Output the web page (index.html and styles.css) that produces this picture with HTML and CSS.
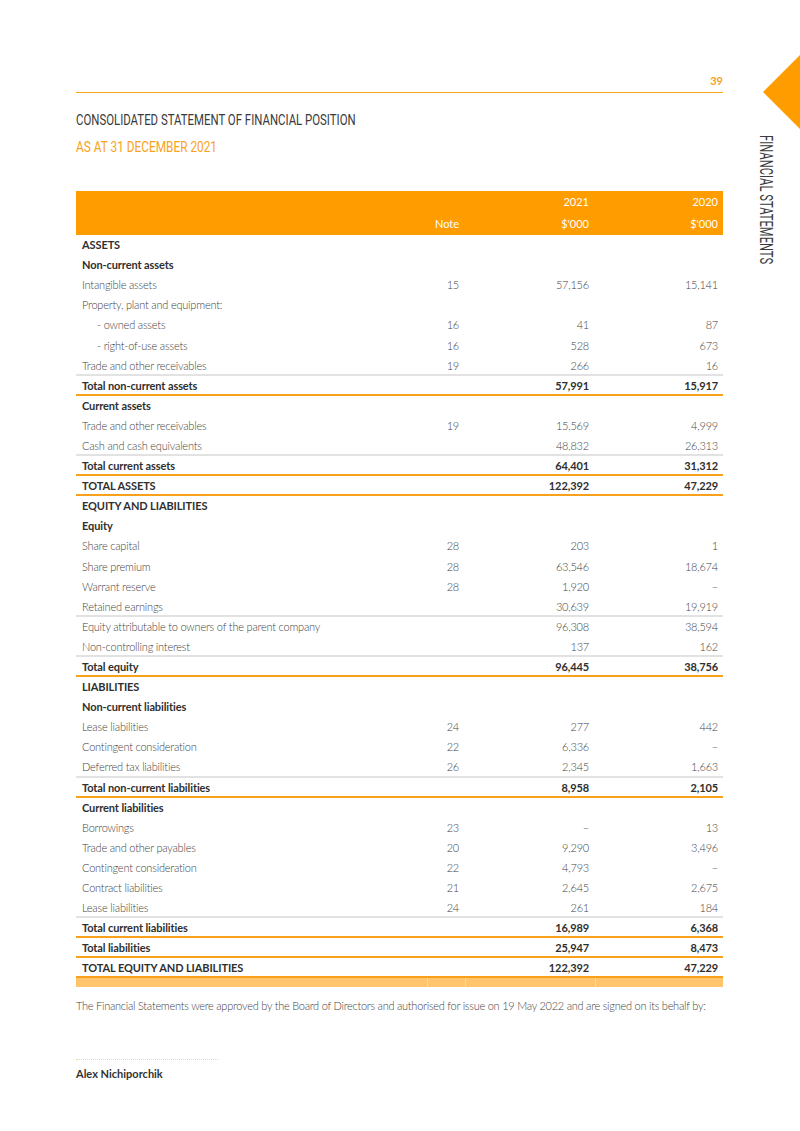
FILE: index.html
```html
<!DOCTYPE html>
<html lang="en">
<head>
<meta charset="utf-8">
<title>Consolidated Statement of Financial Position</title>
<link rel="stylesheet" href="styles.css">
</head>
<body>
<div class="page">
  <div class="topbar"><span class="pagenum">39</span></div>
  <svg class="tab" width="37" height="74" viewBox="0 0 37 74"><polygon points="37,0 0,37 37,74" fill="#ff9c00"/></svg>
  <div class="side">FINANCIAL STATEMENTS</div>

  <h1 class="title"><span class="cond">CONSOLIDATED STATEMENT OF FINANCIAL POSITION</span></h1>
  <h2 class="subtitle"><span class="cond">AS AT 31 DECEMBER 2021</span></h2>

  <div class="fin">
    <div class="hrow"><span></span><span></span><span>2021</span><span>2020</span></div>
    <div class="hrow"><span></span><span>Note</span><span>$'000</span><span>$'000</span></div>

    <div class="row b"><span>ASSETS</span><span></span><span></span><span></span></div>
    <div class="row b"><span>Non-current assets</span><span></span><span></span><span></span></div>
    <div class="row"><span>Intangible assets</span><span>15</span><span>57,156</span><span>15,141</span></div>
    <div class="row"><span>Property, plant and equipment:</span><span></span><span></span><span></span></div>
    <div class="row ind"><span>- owned assets</span><span>16</span><span>41</span><span>87</span></div>
    <div class="row ind"><span>- right-of-use assets</span><span>16</span><span>528</span><span>673</span></div>
    <div class="row gl"><span>Trade and other receivables</span><span>19</span><span>266</span><span>16</span></div>
    <div class="row b ol"><span>Total non-current assets</span><span></span><span>57,991</span><span>15,917</span></div>
    <div class="row b"><span>Current assets</span><span></span><span></span><span></span></div>
    <div class="row"><span>Trade and other receivables</span><span>19</span><span>15,569</span><span>4,999</span></div>
    <div class="row gl"><span>Cash and cash equivalents</span><span></span><span>48,832</span><span>26,313</span></div>
    <div class="row b ol"><span>Total current assets</span><span></span><span>64,401</span><span>31,312</span></div>
    <div class="row b ol"><span>TOTAL ASSETS</span><span></span><span>122,392</span><span>47,229</span></div>
    <div class="row b"><span>EQUITY AND LIABILITIES</span><span></span><span></span><span></span></div>
    <div class="row b"><span>Equity</span><span></span><span></span><span></span></div>
    <div class="row"><span>Share capital</span><span>28</span><span>203</span><span>1</span></div>
    <div class="row"><span>Share premium</span><span>28</span><span>63,546</span><span>18,674</span></div>
    <div class="row"><span>Warrant reserve</span><span>28</span><span>1,920</span><span>–</span></div>
    <div class="row gl"><span>Retained earnings</span><span></span><span>30,639</span><span>19,919</span></div>
    <div class="row"><span>Equity attributable to owners of the parent company</span><span></span><span>96,308</span><span>38,594</span></div>
    <div class="row gl"><span>Non-controlling interest</span><span></span><span>137</span><span>162</span></div>
    <div class="row b ol"><span>Total equity</span><span></span><span>96,445</span><span>38,756</span></div>
    <div class="row b"><span>LIABILITIES</span><span></span><span></span><span></span></div>
    <div class="row b"><span>Non-current liabilities</span><span></span><span></span><span></span></div>
    <div class="row"><span>Lease liabilities</span><span>24</span><span>277</span><span>442</span></div>
    <div class="row"><span>Contingent consideration</span><span>22</span><span>6,336</span><span>–</span></div>
    <div class="row gl"><span>Deferred tax liabilities</span><span>26</span><span>2,345</span><span>1,663</span></div>
    <div class="row b ol"><span>Total non-current liabilities</span><span></span><span>8,958</span><span>2,105</span></div>
    <div class="row b"><span>Current liabilities</span><span></span><span></span><span></span></div>
    <div class="row"><span>Borrowings</span><span>23</span><span>–</span><span>13</span></div>
    <div class="row"><span>Trade and other payables</span><span>20</span><span>9,290</span><span>3,496</span></div>
    <div class="row"><span>Contingent consideration</span><span>22</span><span>4,793</span><span>–</span></div>
    <div class="row"><span>Contract liabilities</span><span>21</span><span>2,645</span><span>2,675</span></div>
    <div class="row gl"><span>Lease liabilities</span><span>24</span><span>261</span><span>184</span></div>
    <div class="row b ol"><span>Total current liabilities</span><span></span><span>16,989</span><span>6,368</span></div>
    <div class="row b ol"><span>Total liabilities</span><span></span><span>25,947</span><span>8,473</span></div>
    <div class="row b ol"><span>TOTAL EQUITY AND LIABILITIES</span><span></span><span>122,392</span><span>47,229</span></div>
    <div class="bar"><span></span><span></span><span></span><span></span></div>
  </div>

  <p class="approval">The Financial Statements were approved by the Board of Directors and authorised for issue on 19 May 2022 and are signed on its behalf by:</p>
  <div class="sigline"></div>
  <p class="signame">Alex Nichiporchik</p>
</div>
</body>
</html>
```

FILE: styles.css
```css
html, body {
  margin: 0;
  padding: 0;
  background: #ffffff;
}

body {
  font-family: Lato, "Open Sans", sans-serif;
  color: #444444;
}

.page {
  position: relative;
  width: 800px;
  height: 1131px;
  box-sizing: border-box;
  padding: 74px 77px 0 76px;
  overflow: hidden;
}

.topbar {
  display: flex;
  justify-content: flex-end;
  height: 18px;
  border-bottom: 1px solid #f8a11c;
}

.pagenum {
  font-size: 11px;
  font-weight: 700;
  line-height: 14px;
  color: #f8a11c;
}

.tab {
  position: absolute;
  left: 763px;
  top: 55px;
  display: block;
}

.side {
  position: absolute;
  left: 757px;
  top: 135px;
  writing-mode: vertical-rl;
  font-family: Roboto, sans-serif;
  font-weight: 400;
  font-size: 18px;
  line-height: 18px;
  color: #3b3b3b;
  transform: scaleY(0.623);
  transform-origin: top left;
  white-space: nowrap;
}

.title, .subtitle {
  margin: 0;
  font-family: Roboto, sans-serif;
  font-weight: 400;
  font-size: 15px;
  line-height: 20px;
  white-space: nowrap;
}

.cond {
  display: inline-block;
  transform-origin: left center;
}

.title {
  margin-top: 17px;
  color: #3a3a3a;
}

.title .cond {
  transform: scaleX(0.76);
}

.subtitle {
  margin-top: 7px;
  color: #f9a21b;
}

.subtitle .cond {
  transform: scaleX(0.79);
}

.fin {
  margin-top: 34px;
  width: 647px;
  font-size: 11px;
}

.hrow, .row, .bar {
  display: grid;
  grid-template-columns: 351px 38px 130px 128px;
}

.hrow {
  height: 22px;
  background: #ff9c00;
  color: #ffffff;
  align-items: center;
  line-height: 14px;
  font-size: 11px;
}

.hrow span, .row span {
  text-align: right;
  padding-right: 6px;
}

.hrow span:last-child, .row span:last-child {
  padding-right: 5px;
}

.row {
  height: 20.1px;
  box-sizing: border-box;
  align-items: center;
  line-height: 14px;
  font-weight: 300;
  letter-spacing: -0.2px;
  color: #3f3f3f;
}

.row span:first-child {
  text-align: left;
  padding-left: 6px;
  white-space: nowrap;
}

.row.ind span:first-child {
  padding-left: 21px;
}

.row.b {
  font-weight: 700;
  letter-spacing: -0.1px;
  color: #2f2f2f;
}

.row.gl {
  padding-top: 2px;
  border-bottom: 2px solid #e2e2e2;
}

.row.ol {
  padding-top: 2px;
  border-bottom: 2px solid #f9a11b;
}

.bar {
  height: 9px;
  background: #ffc46c;
}

.bar span + span {
  border-left: 1px solid rgba(255, 255, 255, 0.35);
}

.approval {
  margin: 11px 0 0;
  font-size: 11px;
  letter-spacing: -0.25px;
  line-height: 16px;
  font-weight: 300;
  color: #3f3f3f;
  white-space: nowrap;
}

.sigline {
  margin-top: 45px;
  width: 142px;
  border-top: 1px dotted #fbd393;
}

.signame {
  margin: 6px 0 0;
  font-size: 11px;
  line-height: 16px;
  font-weight: 700;
  color: #333333;
}
```
